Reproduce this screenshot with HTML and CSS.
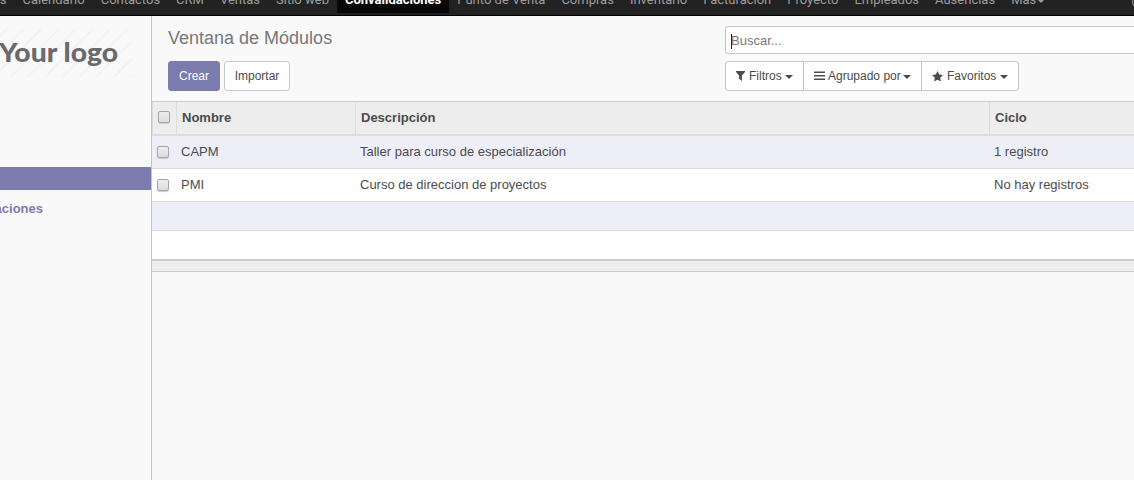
FILE: index.html
```html
<!DOCTYPE html>
<html lang="es">
<head>
<meta charset="utf-8">
<title>Ventana de Módulos</title>
<link rel="stylesheet" href="styles.css">
</head>
<body>
<nav class="navbar">
  <ul class="menu">
    <li>Conversaciones</li><li>Calendario</li><li>Contactos</li><li>CRM</li><li>Ventas</li><li>Sitio web</li><li class="active">Convalidaciones</li><li>Punto de Venta</li><li>Compras</li><li>Inventario</li><li>Facturación</li><li>Proyecto</li><li>Empleados</li><li>Ausencias</li><li>Más<span class="caret"></span></li>
  </ul>
  <span class="systray">@</span>
</nav>
<div class="page">
  <aside class="sidebar">
    <div class="logo"><svg width="133" height="49" viewBox="0 0 133 49">
      <defs><pattern id="stripes" width="17.2" height="17.2" patternUnits="userSpaceOnUse" patternTransform="translate(7 0)"><path d="M-4 21.2L21.2-4M-4 4L4-4M13.2 21.2L21.2 13.2" stroke="#f3f3f3" stroke-width="2"/></pattern></defs>
      <rect width="132" height="48" fill="url(#stripes)"/>
      <text class="logo-text" x="-1" y="33" textLength="119" lengthAdjust="spacingAndGlyphs">Your logo</text>
    </svg></div>
    <div class="side-active"></div>
    <div class="side-link"><span>Convalidaciones</span></div>
  </aside>
  <main class="content">
    <header class="panel">
      <div class="left">
        <h1>Ventana de Módulos</h1>
        <div class="buttons"><button class="btn primary">Crear</button><button class="btn">Importar</button></div>
      </div>
      <div class="right">
        <div class="search"><span class="cursor"></span>Buscar...</div>
        <div class="filters">
          <button class="btn filter"><svg class="icon" width="9" height="10" viewBox="0 0 9 10"><path d="M0 0H9V1L5.9 4.5V10L3.1 7.8V4.5L0 1Z"/></svg><span>Filtros</span><span class="caret"></span></button>
          <button class="btn group"><svg class="icon" width="11" height="10" viewBox="0 0 11 10"><path d="M0 .5H11V2H0ZM0 4H11V5.5H0ZM0 7.5H11V9H0Z"/></svg><span>Agrupado por</span><span class="caret"></span></button>
          <button class="btn fav"><svg class="icon" width="11" height="11" viewBox="0 0 11 11"><path d="M5.5 0L7.2 3.5L11 4L8.2 6.7L8.9 10.6L5.5 8.8L2.1 10.6L2.8 6.7L0 4L3.8 3.5Z"/></svg><span>Favoritos</span><span class="caret"></span></button>
        </div>
      </div>
    </header>
    <section class="list">
      <div class="row head"><div class="check"><i class="box"></i></div><div>Nombre</div><div>Descripción</div><div>Ciclo</div></div>
      <div class="row odd"><div class="check"><i class="box"></i></div><div>CAPM</div><div>Taller para curso de especialización</div><div>1 registro</div></div>
      <div class="row"><div class="check"><i class="box"></i></div><div>PMI</div><div>Curso de direccion de proyectos</div><div>No hay registros</div></div>
      <div class="row odd empty"></div>
      <div class="row empty last"></div>
      <div class="foot"></div>
    </section>
  </main>
</div>
</body>
</html>
```
FILE: styles.css
```css
* { box-sizing: border-box; }
body { margin: 0; height: 480px; overflow: hidden; background: #f9f9f9; color: #4c4c4c; font: 13px/18px "Liberation Sans", Arial, sans-serif; }
.navbar { height: 16px; background: #222; border-bottom: 1px solid #000; display: flex; align-items: flex-start; justify-content: space-between; overflow: hidden; color: #9d9d9d; font-family: Roboto, sans-serif; }
.menu { display: flex; margin: 0 0 0 -94px; padding: 0; list-style: none; }
.menu li { flex: none; height: 26px; margin-top: -13px; padding: 4px 8px; white-space: nowrap; }
.menu .active { background: #080808; color: #fff; font-weight: bold; }
.systray { flex: none; margin: -9px -9px 0 0; }
.caret { display: inline-block; border: 4px solid transparent; border-top-color: currentColor; border-bottom: 0; vertical-align: middle; margin-left: 1px; }
.page { display: flex; height: 464px; }
.sidebar { width: 152px; flex: none; border-right: 1px solid #c3c3c3; overflow: hidden; }
.logo { height: 151px; padding-top: 13px; }
.logo svg { display: block; }
.logo-text { font: 900 26px Lato, sans-serif; fill: #6a6a6a; }
.side-active { height: 23px; background: #7c7bad; }
.side-link { display: flex; justify-content: flex-end; width: 43px; margin-top: 10px; color: #7c7bad; font-weight: bold; }
.content { flex: 1; min-width: 0; overflow: hidden; }
.panel { height: 86px; display: flex; border-bottom: 1px solid #cacaca; }
.left { width: 573px; flex: none; padding: 12px 0 0 16px; }
h1 { margin: 0 0 13px; font-size: 18px; line-height: 20px; font-weight: normal; color: #777; }
.buttons { display: flex; gap: 4px; }
.btn { height: 30px; border: 1px solid #c7c7c7; border-radius: 3px; background: #fff; color: #4c4c4c; font: 12px/18px "Liberation Sans", Arial, sans-serif; padding: 0; width: 66px; white-space: nowrap; }
.btn.primary { width: 52px; background: #7c7bad; border-color: #7c7bad; color: #fff; }
.right { flex: 1; padding-top: 10px; }
.search { display: flex; align-items: center; height: 28px; width: 430px; border: 1px solid #c7c7c7; border-radius: 3px; background: #fff; color: #777; padding: 1px 0 0 5px; }
.cursor { width: 1px; height: 15px; background: #222; margin: 1px -1px 0 0; }
.filters { display: flex; margin-top: 7px; }
.filters .btn { display: flex; align-items: center; justify-content: flex-start; padding-left: 10px; border-radius: 0; margin-right: -1px; }
.filters .filter { width: 79px; border-radius: 3px 0 0 3px; }
.filters .group { width: 119px; }
.filters .fav { width: 98px; border-radius: 0 3px 3px 0; }
.icon { fill: #4c4c4c; margin-right: 4px; flex: none; }
.group .icon { margin-right: 3px; }
.filters .caret { margin: 2px 0 0 3px; }
.filters .fav .caret { margin-left: 4px; }
.filters .group .caret { margin-left: 2px; }
.row { display: grid; grid-template-columns: 24px 179px 634px 1fr; height: 33px; background: #fff; border-bottom: 1px solid #dcdcdc; align-items: center; }
.row > div { padding-left: 5px; white-space: nowrap; }
.row > .check { padding: 0 0 1px 5px; }
.odd { background: #eeeef8; }
.head { height: 34px; background: #ededed; border-bottom: 2px solid #dcdcdc; font-weight: bold; align-items: stretch; line-height: 31px; }
.head > div { border-right: 1px solid #dcdcdc; padding-left: 6px; }
.head > div:last-child { border-right: 0; }
.head > .check { width: 25px; display: flex; align-items: center; padding: 0 0 2px 5px; border-left: 1px solid #dcdcdc; }
.head > div:nth-child(2), .head > div:nth-child(3) { width: calc(100% + 1px); }
.box { display: block; width: 12px; height: 12px; border: 1px solid #a5a5a5; border-radius: 2px; background: linear-gradient(#eee, #dcdcdc); box-shadow: 0 1px 1px #ccc; }
.row.empty { height: 29px; }
.row.last { height: 30px; border-bottom: 2px solid #cacaca; }
.foot { height: 11px; background: #ededed; border-bottom: 1px solid #cacaca; }
```
